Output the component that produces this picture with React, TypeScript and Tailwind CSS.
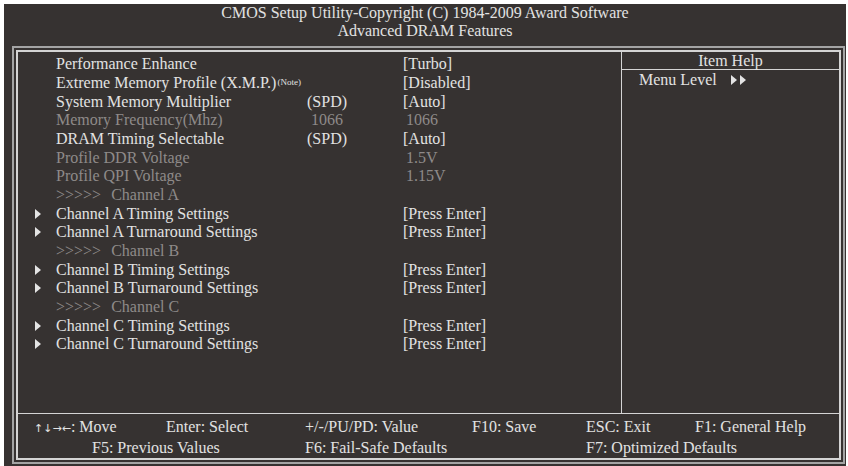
import React from "react";

type Row = {
  label: string;
  mid?: string;
  value?: string;
  dim?: boolean;
  arrow?: boolean;
  header?: boolean;
  note?: boolean;
};

const rows: Row[] = [
  { label: "Performance Enhance", value: "[Turbo]" },
  { label: "Extreme Memory Profile (X.M.P.)", value: "[Disabled]", note: true },
  { label: "System Memory Multiplier", mid: "(SPD)", value: "[Auto]" },
  { label: "Memory Frequency(Mhz)", mid: "1066", value: "1066", dim: true },
  { label: "DRAM Timing Selectable", mid: "(SPD)", value: "[Auto]" },
  { label: "Profile DDR Voltage", value: "1.5V", dim: true },
  { label: "Profile QPI Voltage", value: "1.15V", dim: true },
  { label: "Channel A", header: true },
  { label: "Channel A Timing Settings", value: "[Press Enter]", arrow: true },
  { label: "Channel A Turnaround Settings", value: "[Press Enter]", arrow: true },
  { label: "Channel B", header: true },
  { label: "Channel B Timing Settings", value: "[Press Enter]", arrow: true },
  { label: "Channel B Turnaround Settings", value: "[Press Enter]", arrow: true },
  { label: "Channel C", header: true },
  { label: "Channel C Timing Settings", value: "[Press Enter]", arrow: true },
  { label: "Channel C Turnaround Settings", value: "[Press Enter]", arrow: true },
];

function Tri({ className = "" }: { className?: string }) {
  return (
    <svg width="6" height="10" viewBox="0 0 6 10" className={className}>
      <polygon points="0,0 6,5 0,10" fill="#e4e4e4" />
    </svg>
  );
}

export default function App() {
  return (
    <div className="w-[848px] h-[466px] bg-white pt-[4px] pl-[4px] pr-[2px] font-['Liberation_Serif',serif] text-[16px] text-[#e2e2e2]">
      <div className="h-full bg-[#363231] flex flex-col">
        {/* title */}
        <div className="h-[42px] flex flex-col items-center leading-[18px]">
          <div>CMOS Setup Utility-Copyright (C) 1984-2009 Award Software</div>
          <div>Advanced DRAM Features</div>
        </div>

        <div className="h-[418px] ml-[8px] mr-[1px] border-2 border-[#a4a4a4] p-[2px]">
          <div className="h-full border-2 border-[#d4d4d4] flex flex-col">
            <div className="flex flex-1">
              {/* settings list */}
              <div className="w-[603px] pt-[3px]">
                {rows.map((r, i) => (
                  <div
                    key={i}
                    className={`flex items-center h-[18.67px] leading-[18px] ${
                      r.dim || r.header ? "text-[#8e8a89]" : ""
                    }`}
                  >
                    <div className="w-[38px] flex pl-[17px]">{r.arrow && <Tri />}</div>
                    <div className="w-[251px] whitespace-nowrap">
                      {r.header ? (
                        <span>
                          {">>>>>"}
                          <span className="ml-[10px]">{r.label}</span>
                        </span>
                      ) : (
                        <span>
                          {r.label}
                          {r.note && (
                            <sup className="text-[9px] ml-[1px] relative -top-[3px]">(Note)</sup>
                          )}
                        </span>
                      )}
                    </div>
                    <div className={`w-[96px] ${r.dim ? "pl-[4px]" : ""}`}>{r.mid}</div>
                    <div className={r.dim ? "pl-[3px]" : ""}>{r.value}</div>
                  </div>
                ))}
              </div>

              {/* help */}
              <div className="flex-1 border-l border-[#d4d4d4] flex flex-col">
                <div className="h-[18px] border-b border-[#d4d4d4] flex items-center justify-center leading-[18px]">
                  Item Help
                </div>
                <div className="flex items-center pl-[17px] h-[19px] leading-[18px]">
                  <span className="w-[92px]">Menu Level</span>
                  <Tri />
                  <Tri className="ml-[3px]" />
                </div>
              </div>
            </div>

            {/* footer */}
            <div className="h-[45px] border-t border-[#d4d4d4] pt-[4px] leading-[18.67px] whitespace-nowrap">
              <div className="flex pl-[16px]">
                <span className="w-[132px]">
                  <span className="font-['DejaVu_Sans',sans-serif] text-[11px]">↑↓→←</span>: Move
                </span>
                <span className="w-[139px]">Enter: Select</span>
                <span className="w-[167px]">+/-/PU/PD: Value</span>
                <span className="w-[114px]">F10: Save</span>
                <span className="w-[109px]">ESC: Exit</span>
                <span>F1: General Help</span>
              </div>
              <div className="flex pl-[74px]">
                <span className="w-[213px]">F5: Previous Values</span>
                <span className="w-[281px]">F6: Fail-Safe Defaults</span>
                <span>F7: Optimized Defaults</span>
              </div>
            </div>
          </div>
        </div>
      </div>
    </div>
  );
}
